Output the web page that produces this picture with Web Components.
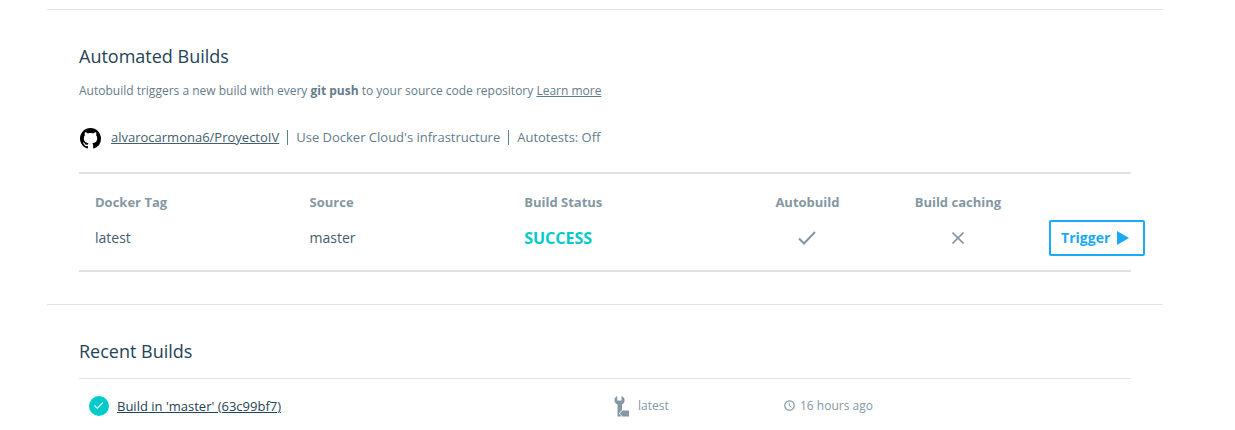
<!DOCTYPE html>
<html lang="en">
<head>
<meta charset="utf-8">
<title>Builds</title>
<style>
body { margin: 0; background: #fff; font-family: "Open Sans", "Noto Sans", sans-serif; color: #254356; }
</style>
</head>
<body>
<builds-page></builds-page>
<script>
const base = '<style>*{box-sizing:border-box}a{color:inherit}svg{display:block;flex:none}</style>';
function define(name, html) {
  customElements.define(name, class extends HTMLElement {
    constructor() {
      super();
      this.attachShadow({ mode: 'open' }).innerHTML = base + html;
    }
  });
}

define('page-section', `
<style>
:host { display: block; border-top: 1px solid #e0e4e7; padding: 32px 32px 0; }
h2 { margin: 0; font-size: 18px; line-height: 28px; font-weight: 400; color: #254356; }
</style>
<h2><slot name="title"></slot></h2>
<slot></slot>`);

define('source-info', `
<style>
:host { display: flex; align-items: center; margin-top: 24px; height: 24px; font-size: 13px; line-height: 20px; color: #647c8c; }
svg { margin: 2px 10px 0 1px; }
a { color: #445d6e; }
span { margin-left: 8px; display: flex; align-items: center; }
span::before { content: ""; height: 15px; border-left: 1px solid #647c8c; margin-right: 8px; }
</style>
<svg width="21" height="21" viewBox="0 0 16 16" aria-label="GitHub"><path fill="#000" d="M8 0C3.58 0 0 3.58 0 8c0 3.54 2.29 6.53 5.47 7.59.4.07.55-.17.55-.38 0-.19-.01-.82-.01-1.49-2.01.37-2.53-.49-2.69-.94-.09-.23-.48-.94-.82-1.13-.28-.15-.68-.52-.01-.53.63-.01 1.08.58 1.23.82.72 1.21 1.87.87 2.33.66.07-.52.28-.87.51-1.07-1.78-.2-3.64-.89-3.64-3.95 0-.87.31-1.59.82-2.15-.08-.2-.36-1.02.08-2.12 0 0 .67-.21 2.2.82.64-.18 1.32-.27 2-.27s1.36.09 2 .27c1.53-1.04 2.2-.82 2.2-.82.44 1.1.16 1.92.08 2.12.51.56.82 1.27.82 2.15 0 3.07-1.87 3.75-3.65 3.95.29.25.54.73.54 1.48 0 1.07-.01 1.93-.01 2.2 0 .21.15.46.55.38A8.01 8.01 0 0 0 16 8c0-4.42-3.58-8-8-8z"/></svg>
<a href="#source"><slot></slot></a>
<span>Use Docker Cloud's infrastructure</span>
<span>Autotests: Off</span>`);

define('trigger-button', `
<style>
:host { display: block; }
button { display: flex; align-items: center; gap: 7px; width: 96px; height: 36px; padding: 0 10px; border: 2px solid #1aaaf8; border-radius: 2px; background: #fff; color: #1aaaf8; font: 700 14px/20px "Open Sans", sans-serif; }
</style>
<button type="button"><slot></slot><svg width="12" height="14" viewBox="0 0 12 14"><path fill="#1aaaf8" d="M0 0l12 7-12 7z"/></svg></button>`);

define('build-rules', `
<style>
:host { display: block; margin-top: 23px; border: solid #dde2e6; border-width: 2px 0; }
table { width: 100%; table-layout: fixed; border-collapse: collapse; text-align: left; }
th { padding: 18px 0 0 16px; font-size: 13px; line-height: 20px; font-weight: 700; color: #8597a3; }
td { padding: 8px 0 14px 16px; height: 58px; font-size: 14px; line-height: 20px; color: #445d6e; }
.text { width: 20.4%; }
.status { width: 21.3%; }
.flag { width: 14.3%; }
.c { text-align: center; padding-left: 0; }
.c svg { margin: 0 auto; }
strong { font-size: 16px; color: #00cbca; }
</style>
<table>
<thead><tr><th class="text">Docker Tag</th><th class="text">Source</th><th class="status">Build Status</th><th class="flag c">Autobuild</th><th class="flag c">Build caching</th><th></th></tr></thead>
<tbody><tr><td>latest</td><td>master</td><td><strong>SUCCESS</strong></td>
<td class="c"><svg width="18" height="14" viewBox="0 0 18 14" aria-label="On"><path fill="none" stroke="#8597a3" stroke-width="2" d="M1 7.500l5 5L17 1"/></svg></td>
<td class="c"><svg width="12" height="12" viewBox="0 0 12 12" aria-label="Off"><path fill="none" stroke="#8597a3" stroke-width="1.600" d="M.5.5l11 11M11.500.5l-11 11"/></svg></td>
<td><trigger-button>Trigger</trigger-button></td></tr></tbody>
</table>`);

define('build-row', `
<style>
:host { display: grid; grid-template-columns: 535fr 170fr 347fr; align-items: center; margin-top: 13px; padding-top: 16px; border-top: 1px solid #e0e4e7; font-size: 12px; line-height: 22px; color: #8597a3; }
div { display: flex; align-items: center; }
.name { gap: 8px; padding-left: 10px; font-size: 13px; color: #254356; }
.tag { gap: 8px; }
.time { gap: 5px; }
</style>
<div class="name"><svg width="20" height="20" viewBox="0 0 20 20" aria-label="Success"><circle cx="10" cy="10" r="10" fill="#00cbca"/><path fill="none" stroke="#fff" stroke-width="1.1" d="M5.500 9.500l2.800 2.800 5.700-6"/></svg><a href="#build"><slot></slot></a></div>
<div class="tag"><svg width="16" height="22" viewBox="0 0 16 22"><path fill="#8597a3" d="M3.200 1v4.500h4.400V1c2 .8 3 2.300 3 4.200 0 2-1 3.400-2.600 4.200V15L5 18.200l2.500 3.300H3.500V9.400C1.700 8.600.5 7.200.5 5.200.5 3.300 1.500 1.800 3.200 1z"/><path fill="#8597a3" d="M8.500 15.500H15v6H8.500L5.800 18.500z"/></svg><slot name="tag"></slot></div>
<div class="time"><svg width="11" height="13" viewBox="0 0 11 13"><g fill="none" stroke="#8597a3"><circle cx="5.500" cy="5.500" r="4.700" stroke-width="1.200"/><path d="M5.300 2.700v3l2.200 1.400"/></g></svg><slot name="time"></slot></div>`);

define('builds-page', `
<style>
:host { display: block; padding: 9px 72px 0 47px; }
p { margin: 11px 0 0; font-size: 12px; line-height: 20px; color: #647c8c; }
.first { padding-bottom: 32px; }
</style>
<page-section class="first"><span slot="title">Automated Builds</span>
<p>Autobuild triggers a new build with every <b>git push</b> to your source code repository <a href="#learn">Learn more</a></p>
<source-info>alvarocarmona6/ProyectoIV</source-info>
<build-rules></build-rules>
</page-section>
<page-section><span slot="title">Recent Builds</span>
<build-row>Build in 'master' (63c99bf7)<span slot="tag">latest</span><span slot="time">16 hours ago</span></build-row>
</page-section>`);
</script>
</body>
</html>
